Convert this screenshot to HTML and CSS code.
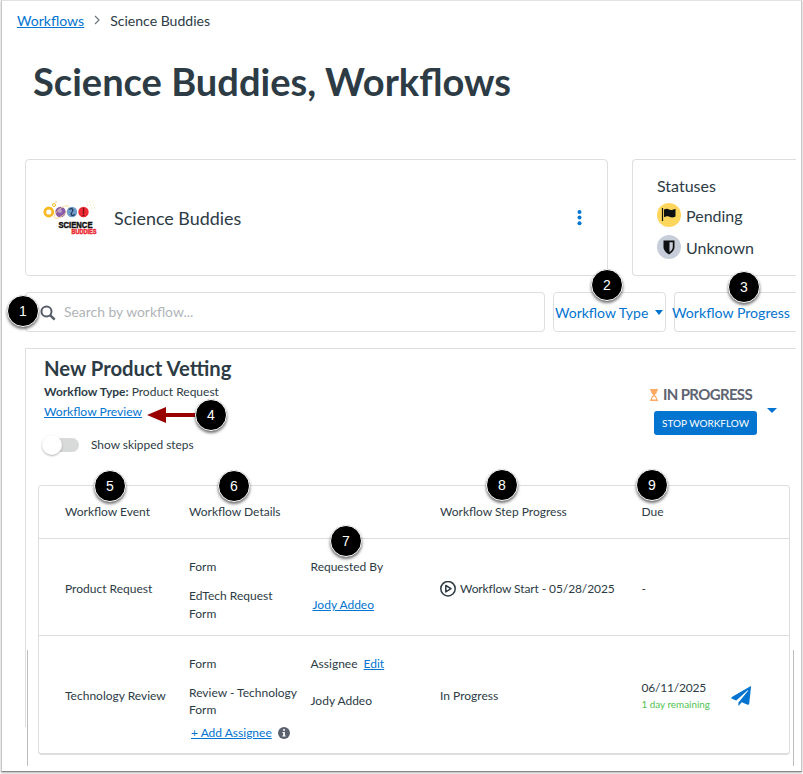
FILE: index.html
```html
<!DOCTYPE html>
<html lang="en">
<head>
    <meta charset="UTF-8">
    <meta name="viewport" content="width=device-width, initial-scale=1.0">
    <title>Science Buddies, Workflows</title>
    <link rel="stylesheet" href="styles.css">
</head>
<body>
    <div class="page">
        <nav class="breadcrumb">
            <a href="#">Workflows</a>
            <svg class="crumb-arrow" width="6" height="10" viewBox="0 0 6 10"><path d="M1 1l4 4-4 4" fill="none" stroke="#6b7780" stroke-width="1.2"/></svg>
            <span>Science Buddies</span>
        </nav>

        <h1 class="title">Science Buddies, Workflows</h1>

        <div class="top-row">
            <div class="card product">
                <svg class="logo" width="54" height="38" viewBox="0 0 54 38">
                    <circle cx="4.800" cy="12" r="4" fill="none" stroke="#f7b924" stroke-width="2.8"/>
                    <circle cx="10" cy="5" r="1.5" fill="none" stroke="#f7b924"/>
                    <circle cx="12" cy="2" r=".7" fill="#f7b924"/>
                    <circle cx="16.5" cy="12" r="5.200" fill="#8a5ca8"/>
                    <circle cx="16" cy="11" r="2" fill="#b99bcf"/>
                    <ellipse cx="17.5" cy="12" rx="9" ry="3.5" transform="rotate(-40 17.5 12)" fill="none" stroke="#f5d68a" stroke-width=".8"/>
                    <circle cx="28" cy="12" r="5.200" fill="#6f9cc9"/>
                    <path d="M25 9.500c3-2 5 0 3 2.500s0 4.500 3 2.500" fill="none" stroke="#21395a" stroke-width="1.2"/>
                    <circle cx="39.500" cy="12" r="5.200" fill="#ee2a32"/>
                    <path d="M39.500 8v6M38.500 15.500h2" stroke="#7b1116" stroke-width="1.3"/>
                    <path d="M42 2h9M43 5h8M47 8h4" stroke="#f3df9c" stroke-dasharray="1 2"/>
                    <text class="logo-science" x="14.500" y="27.5" textLength="34" lengthAdjust="spacingAndGlyphs">SCIENCE</text>
                    <text class="logo-buddies" x="27.500" y="34.2" textLength="25" lengthAdjust="spacingAndGlyphs">BUDDIES</text>
                </svg>
                <span class="product-name">Science Buddies</span>
                <svg class="kebab" width="5" height="16" viewBox="0 0 5 16" fill="#0374cf"><circle cx="2.500" cy="2" r="2"/><circle cx="2.500" cy="7.600" r="2"/><circle cx="2.500" cy="13.200" r="2"/></svg>
            </div>
            <div class="card statuses">
                <div class="statuses-title">Statuses</div>
                <div class="status">
                    <span class="status-icon pending">
                        <svg width="24" height="24" viewBox="0 0 24 24"><path d="M5.5 5v13" stroke="#111" stroke-width="1.2"/><path d="M7 6.500c2-1 3.500-.8 5.200-.1 2 .8 4 .7 6.300-.6v7.700c-2.300 1.200-4.200 1.100-6.200.3-1.800-.7-3.300-.6-5.300.4z" fill="#0d0f10"/></svg>
                    </span>
                    Pending
                </div>
                <div class="status">
                    <span class="status-icon unknown">
                        <svg width="24" height="24" viewBox="0 0 24 24"><path d="M6.500 5.500h11v6.500c0 3.300-2.600 5.600-5.500 7.400-2.900-1.800-5.500-4.100-5.500-7.400z" fill="#0d0f10"/><path d="M12.500 7.200h3.300V12c0 2-1.300 3.600-3.300 5.100z" fill="#c7cdd9"/></svg>
                    </span>
                    Unknown
                </div>
            </div>
        </div>

        <div class="filters">
            <div class="search">
                <svg width="16" height="16" viewBox="0 0 16 16" fill="none" stroke="#575d6b"><circle cx="6.500" cy="6.500" r="5" stroke-width="2"/><path d="M10.300 10.300l4.400 4.400" stroke-width="2.500"/></svg>
                <span>Search by workflow...</span>
            </div>
            <button class="filter type">Workflow Type <i class="caret"></i></button>
            <button class="filter progress">Workflow Progress</button>
        </div>

        <section class="workflow">
            <div class="workflow-head">
                <div>
                    <h2>New Product Vetting</h2>
                    <p class="meta"><b>Workflow Type:</b> Product Request</p>
                    <p class="preview"><a href="#">Workflow Preview</a></p>
                    <div class="toggle-row">
                        <span class="toggle"></span>
                        <span class="toggle-label">Show skipped steps</span>
                    </div>
                </div>
                <div class="workflow-state">
                    <div class="state-label">
                        <svg width="8" height="12" viewBox="0 0 8 12"><path d="M0 .7h8M0 11.300h8" stroke="#fbaa64" stroke-width="1.4"/><path d="M1 1h6v1.500C7 4.200 5.600 5 4.700 6 5.600 7 7 7.800 7 9.500V11H1V9.500C1 7.800 2.400 7 3.300 6 2.400 5 1 4.200 1 2.500z" fill="#fbaa64"/><path d="M2 10.500C2 8.700 3.200 8 4 7.300c.8.700 2 1.400 2 3.200z" fill="#fff"/></svg>
                        <span>IN PROGRESS</span>
                    </div>
                    <button class="stop">STOP WORKFLOW</button>
                </div>
                <i class="caret big"></i>
            </div>

            <div class="steps">
                <div class="row head">
                    <div>Workflow Event</div>
                    <div>Workflow Details</div>
                    <div></div>
                    <div>Workflow Step Progress</div>
                    <div>Due</div>
                </div>
                <div class="row first">
                    <div>Product Request</div>
                    <div class="details">
                        <p>Form</p>
                        <p class="form-name">EdTech Request Form</p>
                    </div>
                    <div class="person">
                        <p>Requested By</p>
                        <p class="requester"><a href="#">Jody Addeo</a></p>
                    </div>
                    <div class="step">
                        <svg width="16" height="16" viewBox="0 0 16 16" fill="none" stroke="#2d3b45" stroke-width="1.5"><circle cx="8" cy="7.700" r="7.200"/><path d="M5.800 4.500v6.400L11 7.700z" stroke-linejoin="round"/></svg>
                        Workflow Start - 05/28/2025
                    </div>
                    <div>-</div>
                </div>
                <div class="row second">
                    <div>Technology Review</div>
                    <div class="details">
                        <p>Form</p>
                        <p class="form-name">Review - Technology Form</p>
                        <p class="add">
                            <a href="#">+ Add Assignee</a>
                            <svg width="12" height="12" viewBox="0 0 12 12"><circle cx="6" cy="6" r="6" fill="#5b616e"/><path d="M5 2.200h2v1.600H5zM4.500 5h2.400v3.500h.8v1H4.400v-1h.8V6h-.7z" fill="#fff"/></svg>
                        </p>
                    </div>
                    <div class="person">
                        <p>Assignee <a class="edit" href="#">Edit</a></p>
                        <p class="assignee">Jody Addeo</p>
                    </div>
                    <div>In Progress</div>
                    <div class="due">
                        <div>
                            <p class="date">06/11/2025</p>
                            <p class="remaining">1 day remaining</p>
                        </div>
                        <svg class="send" width="20" height="20" viewBox="0 0 512 512" fill="#0374cf"><path d="M498 6 22 281c-19 11-16 37 2 45l109 46L429 111c6-5 14 3 9 9L190 423v83c0 6 4 6 8 2l77-94 151 63c17 7 37-4 40-22L512 24c3-19-8-22-14-18z"/></svg>
                    </div>
                </div>
            </div>
        </section>
    </div>

    <!-- edge of the torn page -->
    <span class="edge left"></span>
    <span class="edge right"></span>

    <!-- callouts over the page -->
    <svg class="arrow" width="52" height="18" viewBox="0 0 52 18"><path d="M0 9L19 1v16z" fill="#990000"/><path d="M18 9h34" stroke="#990000" stroke-width="4"/></svg>
    <span class="badge b1">1</span>
    <span class="badge b2">2</span>
    <span class="badge b3">3</span>
    <span class="badge b4">4</span>
    <span class="badge b5">5</span>
    <span class="badge b6">6</span>
    <span class="badge b7">7</span>
    <span class="badge b8">8</span>
    <span class="badge b9">9</span>
</body>
</html>
```
FILE: styles.css
```css
* {
    box-sizing: border-box;
}

body {
    margin: 0;
    width: 803px;
    height: 774px;
    position: relative;
    overflow: hidden;
    background: #fff;
    color: #2d3b45;
    font-family: Lato, "Liberation Sans", sans-serif;
    font-size: 12px;
}

h1, h2, p {
    margin: 0;
}

a {
    color: #0374cf;
    text-decoration: underline;
}

button {
    font-family: inherit;
    cursor: pointer;
}

.page {
    width: 801px;
    height: 772px;
    margin-left: 1px;
    border: 1px solid #c7c7c7;
    border-top-color: #e2e2e2;
    border-bottom-color: #8a8a8a;
    box-shadow: 0 1px 2px rgba(0, 0, 0, 0.3);
    padding-right: 5px;
}

.breadcrumb {
    display: flex;
    align-items: center;
    height: 38px;
    padding-left: 15px;
    font-size: 14.05px;
}

.crumb-arrow {
    margin: 0 10px;
}

.title {
    padding-left: 31px;
    height: 120px;
    font-size: 38.05px;
    line-height: 84px;
}

.top-row {
    display: flex;
    gap: 24px;
    margin-left: 23px;
}

.card {
    height: 117px;
    border: 1px solid #dcdedf;
    border-radius: 4px;
}

.product {
    display: flex;
    align-items: center;
    width: 583px;
    padding: 0 25px 0 18px;
}

.logo {
    margin-top: 2px;
    overflow: visible;
}

.product-name {
    flex: 1;
    margin-left: 16px;
    font-size: 17.9px;
}

.logo-science, .logo-buddies {
    font-family: "Liberation Sans", Arial, sans-serif;
    font-weight: bold;
}

.logo-science {
    font-size: 9.8px;
    fill: #111;
    stroke: #111;
    stroke-width: 0.5px;
}

.logo-buddies {
    font-size: 6.4px;
    fill: #ee2a32;
    stroke: #ee2a32;
    stroke-width: 0.5px;
}

.statuses {
    flex: 1;
    padding: 15px 0 0 24px;
    border-right: 0;
    border-radius: 4px 0 0 4px;
    font-size: 16px;
}

.statuses-title {
    line-height: 22px;
}

.status {
    display: flex;
    align-items: center;
    gap: 5px;
    height: 24px;
    margin-top: 6px;
}

.status + .status {
    margin-top: 8px;
}

.status-icon {
    width: 24px;
    height: 24px;
    border-radius: 50%;
}

.pending {
    background: #ffd65c;
}

.unknown {
    background: #c7cdd9;
}

.filters {
    display: flex;
    gap: 8px;
    height: 40px;
    margin: 16px 0 0 23px;
}

.search {
    display: flex;
    align-items: center;
    gap: 8px;
    width: 520px;
    padding: 0 0 1px 14px;
    border: 1px solid #dcdedf;
    border-radius: 4px;
    color: #b0b4b8;
    font-size: 13.9px;
}

.search svg {
    margin-top: 2px;
}

.search span {
    margin-top: -1px;
}

.filter {
    padding: 0;
    border: 1px solid #dcdedf;
    border-radius: 4px;
    background: none;
    color: #0374cf;
    font-size: 14px;
    text-align: left;
    white-space: nowrap;
}

.type {
    display: flex;
    align-items: center;
    width: 113px;
    padding-left: 1px;
}

.progress {
    flex: 1;
    border-right: 0;
    border-radius: 4px 0 0 4px;
    font-size: 14.15px;
    text-indent: -3px;
}

.caret {
    margin-left: 7px;
    border: 4px solid transparent;
    border-top: 5px solid #0374cf;
    border-bottom: 0;
}

.caret.big {
    border-width: 5px 5px 0;
    margin: 59px 0 0 10px;
}

.workflow {
    height: 379px;
    margin: 16px 0 0 23px;
    border: 1px solid #dcdedf;
    border-width: 1px 0 0 1px;
}

.workflow-head {
    display: flex;
    height: 136px;
    padding-left: 18px;
}

.workflow-head > div:first-child {
    width: 605px;
}

.workflow h2 {
    height: 32px;
    padding-top: 7px;
    font-size: 20.3px;
    line-height: 24px;
}

.meta {
    padding-top: 3px;
    line-height: 16px;
}

.preview {
    line-height: 16px;
    padding-top: 4px;
    font-size: 12.1px;
}

.toggle-row {
    display: flex;
    align-items: center;
    gap: 12px;
    margin-top: 14px;
    height: 22px;
}

.toggle {
    width: 35px;
    height: 14px;
    border-radius: 7px;
    background: #d8dada;
}

.toggle::before {
    content: "";
    display: block;
    width: 20px;
    height: 20px;
    margin: -3px 0 0 -2px;
    border-radius: 50%;
    background: #fff;
    box-shadow: 0 1px 2px rgba(0, 0, 0, 0.3);
}

.toggle-label {
    margin-top: -2px;
    font-size: 11.9px;
}

.workflow-state {
    width: 108px;
    padding-top: 36px;
}

.state-label {
    display: flex;
    align-items: center;
    gap: 5px;
    height: 19px;
    margin-left: 1px;
    color: #5d6370;
    font-size: 15px;
    font-weight: bold;
    letter-spacing: -0.65px;
    white-space: nowrap;
}

.state-label span {
    margin-top: -2px;
}

.stop {
    display: block;
    width: 103px;
    height: 24px;
    margin: 7px 0 0 5px;
    padding: 0;
    border: 0;
    border-radius: 3px;
    background: #0374cf;
    color: #fff;
    font-size: 10px;
}

.steps {
    width: 752px;
    margin-left: 12px;
    border: 1px solid #dcdedf;
    border-bottom-width: 2px;
    border-radius: 4px;
}

.row {
    display: grid;
    grid-template-columns: 124px 121.5px 129.5px 201.5px 1fr;
    align-items: center;
    padding: 1px 0 0 26px;
    border-bottom: 1px solid #dcdedf;
}

.row:last-child {
    border-bottom: 0;
}

.head {
    height: 53px;
    padding: 0 0 2px 26px;
}

.first {
    height: 97px;
    padding-top: 3px;
}

.second {
    height: 117px;
}

.details, .person {
    align-self: start;
    padding-top: 18px;
    line-height: 18px;
}

.first .details, .first .person {
    padding-top: 16px;
}

.form-name {
    width: 110px;
    margin-top: 11px;
}

.second .form-name {
    line-height: 17px;
}

.requester {
    margin: 20px 0 0 2px;
}

.assignee {
    margin-top: 19px;
}

.edit {
    margin-left: 3px;
}

.add {
    display: flex;
    align-items: center;
    gap: 6px;
    margin: 6px 0 0 2px;
    white-space: nowrap;
}

.step {
    display: flex;
    align-items: center;
    gap: 4px;
    letter-spacing: -0.1px;
    white-space: nowrap;
}

.due {
    display: flex;
    align-items: center;
    gap: 21px;
}

.date {
    letter-spacing: -0.2px;
    line-height: 16px;
}

.remaining {
    color: #4fc34f;
    font-size: 9.9px;
    line-height: 16px;
}

.due > div {
    padding-top: 2px;
}

.send {
    margin-top: 2px;
}

.edge {
    position: absolute;
    top: 650px;
    width: 1px;
    height: 116px;
    background: #bdbdbd;
}

.edge.left {
    left: 27px;
}

.edge.right {
    left: 793px;
}

.arrow {
    position: absolute;
    left: 147px;
    top: 406px;
}

.badge {
    position: absolute;
    width: 32px;
    height: 32px;
    border: 1px solid #fff;
    border-radius: 50%;
    background: #000;
    box-shadow: 0 2px 3px rgba(0, 0, 0, 0.55);
    color: #fff;
    font: 14px/30px "Liberation Sans", Arial, sans-serif;
    text-align: center;
}

.b1 { left: 7px; top: 295px; }
.b2 { left: 591px; top: 269px; }
.b3 { left: 728px; top: 271px; }
.b4 { left: 195px; top: 399px; }
.b5 { left: 94px; top: 470px; }
.b6 { left: 218px; top: 470px; }
.b7 { left: 330px; top: 525px; }
.b8 { left: 486px; top: 469px; }
.b9 { left: 636px; top: 469px; }
```
